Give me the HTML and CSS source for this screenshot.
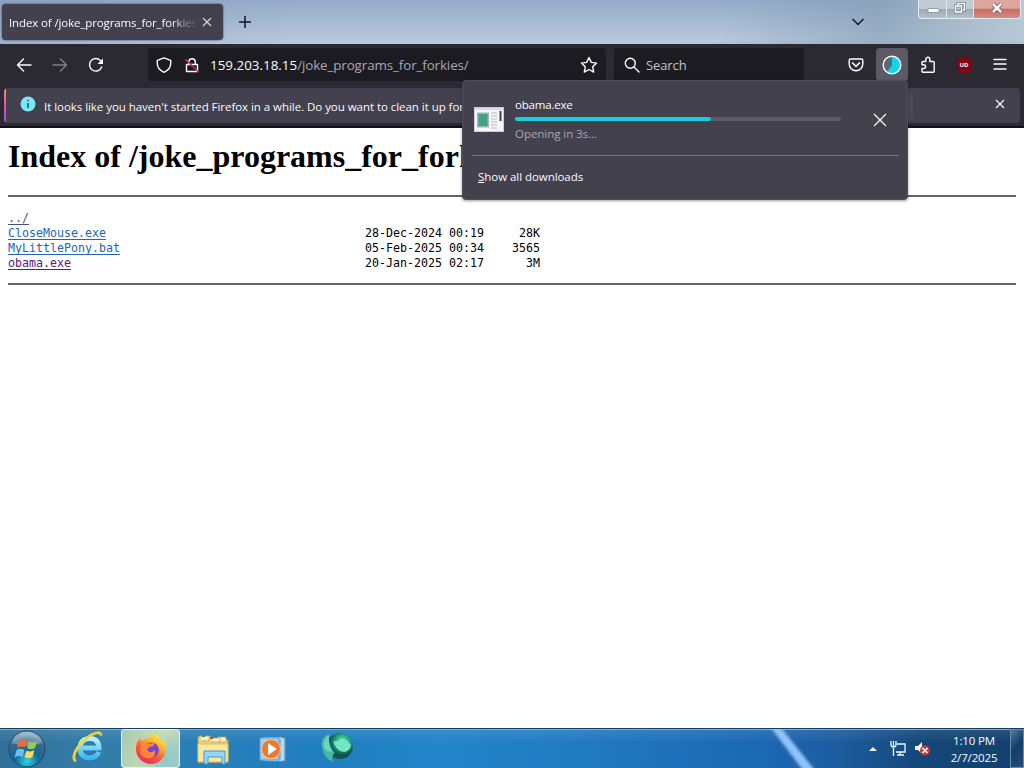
FILE: index.html
```html
<!DOCTYPE html>
<html lang="en">
<head>
<meta charset="utf-8">
<title>Index of /joke_programs_for_forkies/</title>
<link rel="stylesheet" href="styles.css">
</head>
<body>
<div class="desktop">
  <header class="titlebar">
    <div class="tab">
      <span class="tab-title">Index of /joke_programs_for_forkies/</span>
      <svg class="tab-close" width="10" height="10" viewBox="0 0 10 10"><path d="M1 1l8 8M9 1L1 9"/></svg>
    </div>
    <svg class="new-tab" width="14" height="14" viewBox="0 0 14 14"><path d="M7 1v12M1 7h12"/></svg>
    <svg class="all-tabs" width="14" height="8" viewBox="0 0 14 8"><path d="M1.500 1l5.500 5.500L12.500 1"/></svg>
    <div class="window-buttons">
      <span class="wb minimize"><svg width="14" height="14" viewBox="0 0 14 14"><rect x="2" y="7.500" width="11" height="4" rx="1" fill="#fff" stroke="#77818d" stroke-width=".7"/></svg></span>
      <span class="wb restore"><svg width="14" height="14" viewBox="0 0 14 14"><g fill="none" stroke="#6d7782" stroke-width="3"><path d="M5 4V2.500h6.500V9H10"/><rect x="2.500" y="5" width="6" height="6"/></g><g fill="none" stroke="#fff" stroke-width="1.600"><path d="M5 4V2.500h6.500V9H10"/><rect x="2.500" y="5" width="6" height="6"/></g></svg></span>
      <span class="wb close"><svg width="14" height="14" viewBox="0 0 14 14"><path d="M3 3l8 8M11 3l-8 8" stroke="#73474c" stroke-width="4.200"/><path d="M3 3l8 8M11 3l-8 8" stroke="#fff" stroke-width="2.600"/></svg></span>
    </div>
  </header>

  <nav class="toolbar">
    <div class="nav-buttons">
      <svg width="16" height="16" viewBox="0 0 16 16"><path d="M15 8H1.500M7.500 2l-6 6 6 6"/></svg>
      <svg class="dim" width="16" height="16" viewBox="0 0 16 16"><path d="M1 8h13.500M8.500 2l6 6-6 6"/></svg>
      <svg width="16" height="16" viewBox="0 0 16 16"><path d="M13.700 10A6.300 6.300 0 1 1 12.500 3.600L14 5"/><path d="M15 1.500V7H9.500z" fill="#fbfbfe" stroke="none"/></svg>
    </div>
    <div class="urlbar">
      <svg width="16" height="16" viewBox="0 0 16 16"><path d="M8 .9l6.700 2.500v3.100c0 4-2.700 7-6.700 8.800-4-1.800-6.700-4.800-6.700-8.800V3.400z"/></svg>
      <svg width="16" height="16" viewBox="0 0 16 16"><path d="M4.800 7V4.500a3.300 3.300 0 0 1 6.500 0V7M2.500 7.500h11v7h-11z"/><path class="slash" d="M1.500 2.500l12.500 12"/></svg>
      <span class="url"><b>159.203.18.15</b>/joke_programs_for_forkies/</span>
      <svg class="star" width="18" height="18" viewBox="0 0 18 18"><path d="M9 1.500l2.300 4.900 5.300.7-3.900 3.700 1 5.300L9 13.500l-4.700 2.600 1-5.300-3.900-3.700 5.300-.7z"/></svg>
    </div>
    <div class="searchbar">
      <svg width="16" height="16" viewBox="0 0 16 16"><circle cx="6.300" cy="6.300" r="5"/><path d="M10 10l5 5"/></svg>
      <span>Search</span>
    </div>
    <div class="tools">
      <span class="tool"><svg width="16" height="16" viewBox="0 0 16 16"><path d="M2.500 2h11q1.300 0 1.300 1.300V7a6.800 6.800 0 0 1-13.600 0V3.300Q1.200 2 2.500 2z"/><path d="M4.600 6L8 9.300 11.400 6" stroke-width="1.700"/></svg></span>
      <span class="tool active"><svg width="20" height="20" viewBox="0 0 20 20"><circle cx="10" cy="10" r="8.700" fill="#596a70" stroke="none"/><path d="M10 10V1.500A8.500 8.500 0 1 1 5 16.900z" fill="#0fd5ee" stroke="none"/><circle cx="10" cy="10" r="8.800"/></svg></span>
      <span class="tool"><svg width="16" height="18" viewBox="0 0 16 18"><path d="M2 6.300q0-.8.800-.8h3V3.300a2 2 0 0 1 4 0v2.200h3.500q.9 0 .9.900v8.900q0 .9-.9.900H3q-1 0-1-1v-2.700h1.700a1.900 1.900 0 0 0 0-3.800H2z" stroke-dasharray="100" /></svg></span>
      <span class="tool"><span class="shield">UD</span></span>
      <span class="tool"><svg width="16" height="16" viewBox="0 0 16 16"><path d="M2 2.500h12M2 7h12M2 12h12"/></svg></span>
    </div>
  </nav>

  <section class="notification">
    <div class="notification-box">
      <span class="info"><svg width="16" height="16" viewBox="0 0 16 16"><circle cx="8" cy="8" r="7.500" fill="#79e8f6"/><path d="M8 7v5M8 3.700v1.600" stroke="#2f6673" stroke-width="1.800"/></svg></span>
      <span class="notification-text">It looks like you haven't started Firefox in a while. Do you want to clean it up for</span>
      <span class="refresh"></span>
      <svg class="dismiss" width="10" height="10" viewBox="0 0 10 10"><path d="M1 1l8 8M9 1L1 9"/></svg>
    </div>
  </section>

  <main class="page">
    <h1>Index of /joke_programs_for_forkies/</h1>
    <hr>
<pre><a href="#" class="parent">../</a>
<a href="#">CloseMouse.exe</a>                                     28-Dec-2024 00:19     28K
<a href="#">MyLittlePony.bat</a>                                   05-Feb-2025 00:34    3565
<a href="#" class="visited">obama.exe</a>                                          20-Jan-2025 02:17      3M
</pre>
    <hr>
  </main>

  <aside class="downloads">
    <div class="download">
      <svg class="file-icon" width="30" height="25" viewBox="0 0 30 25"><rect x=".5" y=".5" width="29" height="24" fill="#f5f5fa" stroke="#cdcbd5"/><path d="M1 2h28" stroke="#d8dae6" stroke-width="2"/><rect x="3" y="5.500" width="12" height="15" fill="#91bdb2"/><rect x="4.500" y="7" width="9" height="12" fill="#459e85"/><path d="M17 6h6M17 9h6M17 12h6M17 15h6M17 18h6M17 21h6" stroke="#b5b7c3"/><path d="M26.500 4v10" stroke="#33434c" stroke-width="2"/></svg>
      <div class="download-info">
        <div class="file-name">obama.exe</div>
        <div class="progress"><div class="progress-value"></div></div>
        <div class="status">Opening in 3s...</div>
      </div>
      <svg class="cancel" width="14" height="14" viewBox="0 0 14 14"><path d="M1 1l12 12M13 1L1 13"/></svg>
    </div>
    <div class="show-all"><u>S</u>how all downloads</div>
  </aside>

  <footer class="taskbar">
    <svg class="streak" width="80" height="39" viewBox="0 0 80 39"><defs><filter id="soft"><feGaussianBlur stdDeviation="1.700"/></filter></defs><path d="M14-4h10l38 48H50z" fill="#91c3fa" filter="url(#soft)"/></svg>
    <div class="launchers">
      <span class="launcher start"><svg width="40" height="38" viewBox="0 0 40 38"><defs><radialGradient id="orb" cx=".5" cy=".85" r=".85"><stop offset="0" stop-color="#32d1e8"/><stop offset=".4" stop-color="#126793"/><stop offset=".75" stop-color="#366c8d"/><stop offset="1" stop-color="#b8ced8"/></radialGradient></defs><circle cx="20" cy="19" r="18" fill="url(#orb)" stroke="#164a70"/><path d="M5 13Q9 4 20 3.500T35 13Q20 19 5 13" fill="#d0e1e7" opacity=".35"/><path d="M12 11q4-3 8-.5l-2 7q-4-2-8 .5z" fill="#ef693b"/><path d="M22 11.500q4 2 8-.5l-2 7q-4 2.500-8 0z" fill="#9ac94c"/><path d="M9.500 20q4-2.500 8 0l-2 7q-4-2-8 .5z" fill="#72bdeb"/><path d="M19.500 20.500q4 2 8-.5l-2 7q-4 2.500-8 0z" fill="#ffd75a"/></svg></span>
      <span class="launcher ie"><svg width="34" height="34" viewBox="0 0 34 34"><defs><linearGradient id="ieb" x2="0" y2="1"><stop stop-color="#b7f1ff"/><stop offset="1" stop-color="#3fb4ec"/></linearGradient></defs><path d="M28 22q-2.500 6-9.500 6Q9 27.500 9 18q.5-9.500 10-9.500 8.500 0 9 9.500H11" fill="none" stroke="#1272b2" stroke-width="6.500"/><path d="M28 22q-2.500 6-9.500 6Q9 27.500 9 18q.5-9.500 10-9.500 8.500 0 9 9.500H11" fill="none" stroke="url(#ieb)" stroke-width="5.200"/><path d="M5 31C-.500 29 5 17 14 9.500 22 2.500 30 .5 30 5.500" fill="none" stroke="#f8d132" stroke-width="2.700"/></svg></span>
      <span class="launcher current"><svg width="32" height="32" viewBox="0 0 32 32"><defs><linearGradient id="fox" x1=".8" x2=".2" y2="1"><stop stop-color="#fff450"/><stop offset=".35" stop-color="#ffad2b"/><stop offset=".65" stop-color="#ff5137"/><stop offset="1" stop-color="#e72663"/></linearGradient></defs><path d="M19 0q5 3 6 7 2 0 3-1 3 5 3 10a15 15 0 1 1-30 0Q1 9 5 5q1 2 2 3 3-3 7-3 3-2 5-5z" fill="url(#fox)"/><circle cx="16.500" cy="17" r="7.500" fill="#7943d5"/><path d="M6 10q5-2 8 1l5-1q1 3-4 4-4 1-2 4 3 3 7-1 1 6-4 8-9 1-11-6z" fill="#ff863a"/></svg></span>
      <span class="launcher folder"><svg width="34" height="32" viewBox="0 0 34 32"><path d="M2 29V5q0-2 2-2h10l2 3h14q2 0 2 2v21z" fill="#efd27b" stroke="#b39b54"/><path d="M5 3h8v5H5M15 5h9v4h-9M22 4h8v5h-8" fill="#fff1b9" stroke="#b99f4e" stroke-width=".7"/><path d="M6 3h3" stroke="#2a9250" stroke-width="2"/><path d="M14 5h3" stroke="#c44934" stroke-width="2"/><path d="M2 11h30v18H2z" fill="#fae8a0" stroke="#d6bd68"/><path d="M8 31V18h21v13h-3v-7H12v7z" fill="#96d5f4" stroke="#3e9cce"/></svg></span>
      <span class="launcher player"><svg width="28" height="26" viewBox="0 0 28 26"><path d="M8 2h18v23H8z" fill="#a9d0ec" stroke="#5b9ac8"/><path d="M4 2h19v22H4z" fill="#83b8df" stroke="#d4edfb"/><path d="M1 2h19v22H1z" fill="#abcce5" stroke="#609dca"/><circle cx="12" cy="13" r="9.500" fill="#ee792a" stroke="#f4c4a0"/><path d="M9 7l9 6-9 6z" fill="#fff"/></svg></span>
      <span class="launcher globe"><svg width="34" height="30" viewBox="0 0 34 30"><defs><radialGradient id="green" cx=".6" cy=".35"><stop offset="0" stop-color="#82f2cc"/><stop offset=".55" stop-color="#25a680"/><stop offset="1" stop-color="#124f4d"/></radialGradient></defs><circle cx="19" cy="13" r="13" fill="url(#green)"/><path d="M8 1Q-1 5 1 13q1 12 11 16-2-7 2-9-7-7-6-19z" fill="#45b9a4"/><path d="M8 2q-6 5-5 12 3 6 8 4Q7 11 8 2z" fill="#64d8bd"/><path d="M12 8q5 1 8-3 7 2 10 7-1 6-7 7-8-1-11-11z" fill="#6fe8c3"/></svg></span>
    </div>
    <div class="tray">
      <span class="caret"></span>
      <svg class="network" width="17" height="17" viewBox="0 0 17 17"><path d="M7 4h8v8H6M10 12v3M7 15h7M3.500 8v8M1 1v4q0 2 2.500 2T6 5V1M3.500 1v6" fill="none" stroke="#effaff" stroke-width="1.300"/></svg>
      <svg class="volume" width="17" height="17" viewBox="0 0 17 17"><path d="M1 6h3l4-4v12l-4-4H1z" fill="#eff7fc"/><circle cx="11" cy="10.500" r="5" fill="#d43330"/><path d="M8.500 8l5 5M13.500 8l-5 5" stroke="#fff" stroke-width="1.700"/></svg>
      <div class="clock"><div>1:10 PM</div><div>2/7/2025</div></div>
      <span class="show-desktop"></span>
    </div>
  </footer>
</div>
</body>
</html>
```
FILE: styles.css
```css
* { box-sizing: border-box; }
body { margin: 0; overflow: hidden; }
svg { display: block; flex: none; }

.desktop {
  position: relative;
  width: 1024px;
  height: 768px;
  display: flex;
  flex-direction: column;
  background: #fff;
  font-family: "Open Sans", "Noto Sans", sans-serif;
  color: #fbfbfe;
  white-space: nowrap;
}

.titlebar {
  height: 44px;
  flex: none;
  display: flex;
  align-items: flex-start;
  background:
    radial-gradient(ellipse at 85% 120%, #94adbb 0, transparent 20%),
    linear-gradient(90deg, #8298b580 0, transparent 30%, transparent 70%, #7e98ad80 86%, #b7c8d6 100%),
    linear-gradient(#95abc8, #bccbdf);
}
.tab {
  width: 221px;
  height: 36px;
  margin: 4px 0 0 2px;
  padding: 0 11px 0 7px;
  display: flex;
  align-items: center;
  justify-content: space-between;
  background: #42414d;
  border-radius: 4px;
  box-shadow: 0 0 2px #263044;
}
.tab-title {
  width: 189px;
  overflow: hidden;
  font-size: 11.5px;
  letter-spacing: -.12px;
  mask-image: linear-gradient(90deg, #000 85%, transparent);
}
.tab-close, .dismiss, .cancel { fill: none; stroke: #fbfbfe; stroke-width: 1.2; }
.tab-close { stroke: #d5d4dc; }
.new-tab, .all-tabs { fill: none; stroke: #15142a; stroke-width: 1.5; }
.new-tab { margin: 15px 0 0 15px; }
.all-tabs { margin: 18px 53px 0 auto; }
.window-buttons {
  width: 103px;
  height: 19px;
  margin-right: 3px;
  display: flex;
  border: 1px solid #e5edf3;
  border-top: 0;
  border-radius: 0 0 4px 4px;
  overflow: hidden;
}
.wb {
  width: 28px;
  display: grid;
  place-items: center;
  padding-bottom: 3px;
  border-right: 1px solid #dce6ed;
  background: linear-gradient(#c0ccd5 48%, #99a9b5 50%, #b3c3cc);
}
.wb.restore { width: 27px; }
.wb.close { flex: 1; border: 0; background: linear-gradient(#dda69e 46%, #c56c62 50%, #d48b83); }
.wb svg { fill: none; }

.toolbar {
  height: 43px;
  flex: none;
  display: flex;
  align-items: flex-start;
  padding-top: 4px;
  background: #2b2a33;
}
.toolbar svg { fill: none; stroke: #fbfbfe; stroke-width: 1.4; stroke-linejoin: round; stroke-linecap: round; }
.nav-buttons { width: 148px; height: 33px; display: flex; align-items: center; gap: 20px; padding-left: 16px; }
.toolbar .dim { opacity: .4; }
.urlbar, .searchbar { height: 33px; display: flex; align-items: center; background: #1c1b22; border-radius: 3px; font-size: 13px; }
.urlbar { width: 458px; padding: 0 8px; gap: 12px; }
.toolbar .slash { stroke: #e22850; }
.url { margin-left: -2px; color: #a9a8b0; font-size: 13.4px; letter-spacing: -.11px; }
.url b { font-weight: 400; color: #fbfbfe; letter-spacing: 0; }
.star { margin-left: auto; }
.searchbar { width: 190px; margin-left: 8px; padding: 0 10px; gap: 6px; color: #c4c3ca; letter-spacing: -.1px; }
.tools { display: flex; margin-left: 36px; gap: 4px; }
.tool { width: 32px; height: 33px; display: grid; place-items: center; border-radius: 4px; }
.tool.active { background: #5b5a65; }
.shield {
  width: 15px;
  height: 16px;
  display: grid;
  place-items: center;
  border-radius: 6px;
  background: #850410;
  font: bold 6px/1 "Open Sans", sans-serif;
}

.notification { height: 41px; flex: none; padding: 1px 4px 4px; background: #2b2a33; border-bottom: 2px solid #111018; }
.notification-box {
  position: relative;
  height: 35px;
  display: flex;
  align-items: center;
  padding: 0 15px 0 16px;
  background: #42414d;
  border-radius: 4px;
  overflow: hidden;
}
.notification-box::before { content: ""; position: absolute; inset: 0 auto 0 0; width: 2px; background: linear-gradient(#ff8b57, #df55aa, #8757e5); }
.info { margin-top: -4px; }
.notification-text { margin: 2px 0 0 8px; font-size: 11.5px; letter-spacing: -.045px; }
.refresh { width: 210px; height: 27px; margin-left: auto; background: #4b4a56; border-radius: 3px; }
.dismiss { margin: -3px 0 0 82px; }

.page { flex: 1; padding: 0 8px; color: #000; }
h1 { margin: 10px 0 21px; font: bold 32px/36px "Liberation Serif", serif; }
hr { height: 2px; margin: 0; border: 0; background: #626262; }
pre { margin: 14px 0 12px; font: 11.63px/15px "DejaVu Sans Mono", monospace; }
pre a { color: #2167b5; text-underline-offset: 2px; }
pre .parent { color: #4d4c80; }
pre .visited { color: #592078; }

.downloads {
  position: absolute;
  left: 462px;
  top: 80px;
  width: 446px;
  height: 120px;
  padding: 0 8px 0 9px;
  background: #42414d;
  border: 1px solid #4f4e5a;
  border-radius: 4px;
  box-shadow: 0 1px 3px #0006;
  font-size: 11.5px;
  letter-spacing: -.05px;
}
.download { height: 75px; display: flex; align-items: center; border-bottom: 1px solid #75747f; }
.file-icon { margin: 3px 0 0 2px; }
.download-info { width: 326px; margin: 2px 32px 0 11px; }
.file-name, .status { line-height: 16px; }
.file-name { letter-spacing: -.2px; }
.progress { height: 4px; margin: 4px 0 5px; background: #5c5b67; border-radius: 2px; }
.progress-value { width: 60%; height: 4px; background: #16cddd; border-radius: 2px; }
.status { color: #aaa9b2; }
.cancel { margin-top: 4px; }
.show-all { padding: 13px 0 0 6px; line-height: 16px; }

.taskbar {
  position: relative;
  height: 40px;
  flex: none;
  display: flex;
  justify-content: space-between;
  border-top: 1px solid #153d62;
  box-shadow: inset 0 1px #79b0d1;
  background:
    linear-gradient(#ffffff18, transparent 35%),
    linear-gradient(90deg, #316f99 0, #347da8 9%, #297eb8 19%, #207fc1 33%, #2385c9 43%, #217bc1 56%, #1b67b2 75%, #1c5c9f 82%, #144779 90%, #123f6d 100%);
}
.streak { position: absolute; left: 755px; top: 0; }
.launchers { display: flex; }
.launcher { display: grid; place-items: center; height: 39px; }
.start { width: 54px; }
.ie { width: 67px; padding-bottom: 3px; }
.current { width: 59px; border: 1px solid #e0f3f7; border-radius: 3px; background: radial-gradient(circle at 75% 80%, #92c7ca, transparent 60%), linear-gradient(110deg, #a4c9b7, #d0dfad 60%, #a8ced2); }
.folder { width: 66px; }
.player { width: 54px; }
.globe { width: 75px; padding-bottom: 1px; }
.tray { position: relative; display: flex; align-items: center; }
.caret { border: 4px solid transparent; border-top: 0; border-bottom-color: #eef8ff; margin-right: 13px; }
.network { margin-right: 7px; }
.volume { margin-right: 16px; }
.clock { width: 54px; margin-right: 9px; text-align: center; font-size: 11.5px; line-height: 17px; letter-spacing: -.15px; }
.show-desktop { width: 14px; height: 39px; border: 1px solid #648eae; background: linear-gradient(135deg, #55799a, #143c66 45%, #244e77); }
```
